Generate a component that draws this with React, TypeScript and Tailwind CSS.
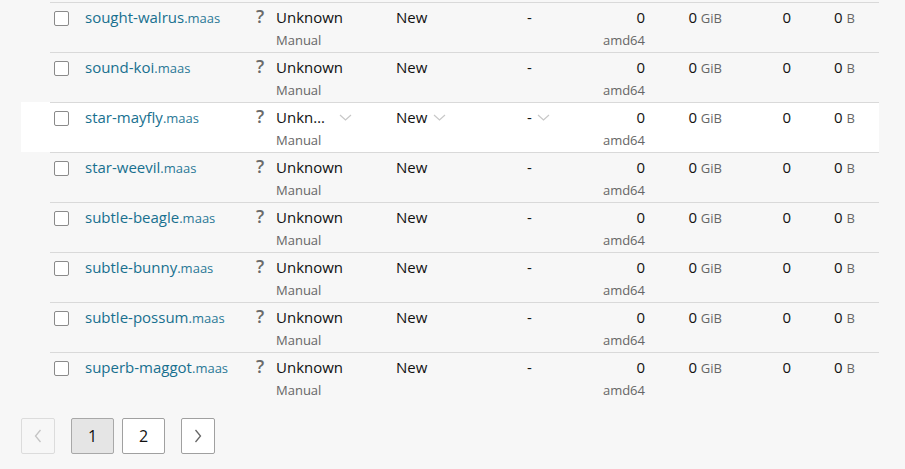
import React from "react";

const rows = [
  "sought-walrus",
  "sound-koi",
  "star-mayfly",
  "star-weevil",
  "subtle-beagle",
  "subtle-bunny",
  "subtle-possum",
  "superb-maggot",
];

function Chevron({ className = "" }: { className?: string }) {
  return (
    <svg width="13" height="7" viewBox="0 0 13 7" className={className} fill="none">
      <path d="M1 1l5.5 5L12 1" stroke="#c8c8c8" strokeWidth="1.2" />
    </svg>
  );
}

function Row({ name, hover }: { name: string; hover?: boolean }) {
  return (
    <div className={`ml-[21px] w-[858px] pl-[29px] ${hover ? "bg-white" : ""}`}>
      <div className="flex h-[50px] border-t border-[#d9d9d9] pt-[4px]">
        <div className="w-[35px] pl-[4px] pt-[4px]">
          <div className="h-[15px] w-[15px] rounded-[2px] border border-[#8a8a8a] bg-white" />
        </div>
        <div className="w-[170px] leading-[20px]">
          <span className="text-[15px] text-[#18708f]">{name}</span>
          <span className="text-[13px] text-[#2a7896]">.maas</span>
        </div>
        <div className="flex w-[141px] items-start">
          <span className="w-[21px] pl-[1px] text-[18px] font-semibold leading-[19px] text-[#6a6a6a]">?</span>
          <div className="flex flex-col">
            <div className="flex items-center text-[15px] leading-[20px] text-[#111]">
              {hover ? (
                <>
                  <span>Unkn…</span>
                  <Chevron className="ml-[14px]" />
                </>
              ) : (
                <span>Unknown</span>
              )}
            </div>
            <span className="mt-[4px] text-[13px] leading-[18px] text-[#666]">Manual</span>
          </div>
        </div>
        <div className="flex w-[131px] items-start text-[15px] leading-[20px] text-[#111]">
          <span>New</span>
          {hover && <Chevron className="ml-[6px] mt-[7px]" />}
        </div>
        <div className="flex w-[53px] items-start text-[15px] leading-[20px] text-[#111]">
          <span>-</span>
          {hover && <Chevron className="ml-[5px] mt-[7px]" />}
        </div>
        <div className="flex w-[65px] flex-col items-end">
          <span className="text-[15px] leading-[20px] text-[#111]">0</span>
          <span className="mt-[4px] text-[13px] leading-[18px] text-[#666]">amd64</span>
        </div>
        <div className="w-[77px] text-right leading-[20px]">
          <span className="text-[15px] text-[#111]">0 </span>
          <span className="text-[13px] text-[#666]">GiB</span>
        </div>
        <div className="w-[69px] text-right text-[15px] leading-[20px] text-[#111]">0</div>
        <div className="w-[64px] text-right leading-[20px]">
          <span className="text-[15px] text-[#111]">0 </span>
          <span className="text-[13px] text-[#666]">B</span>
        </div>
      </div>
    </div>
  );
}

export default function App() {
  return (
    <div
      className="h-[469px] w-[905px] overflow-hidden bg-[#f7f7f7] pt-[2px]"
      style={{ fontFamily: '"Open Sans", "Noto Sans", sans-serif' }}
    >
      {rows.map((r, i) => (
        <Row key={r} name={r} hover={i === 2} />
      ))}
      <div className="ml-[21px] mt-[16px] flex">
        <button className="flex h-[36px] w-[34px] items-center justify-center rounded-[2px] border border-[#dcdcdc] bg-[#f7f7f7]">
          <svg width="8" height="14" viewBox="0 0 8 14" fill="none">
            <path d="M6.5 1L1.5 7l5 6" stroke="#c4c4c4" strokeWidth="1.3" />
          </svg>
        </button>
        <button className="ml-[16px] flex h-[36px] w-[43px] items-center justify-center rounded-[2px] border border-[#a8a8a8] bg-[#e5e5e5] text-[16px] text-[#111]">
          1
        </button>
        <button className="ml-[8px] flex h-[36px] w-[43px] items-center justify-center rounded-[2px] border border-[#a0a0a0] bg-white text-[16px] text-[#111]">
          2
        </button>
        <button className="ml-[16px] flex h-[36px] w-[34px] items-center justify-center rounded-[2px] border border-[#a0a0a0] bg-white">
          <svg width="8" height="14" viewBox="0 0 8 14" fill="none">
            <path d="M1.5 1l5 6-5 6" stroke="#666" strokeWidth="1.3" />
          </svg>
        </button>
      </div>
    </div>
  );
}
